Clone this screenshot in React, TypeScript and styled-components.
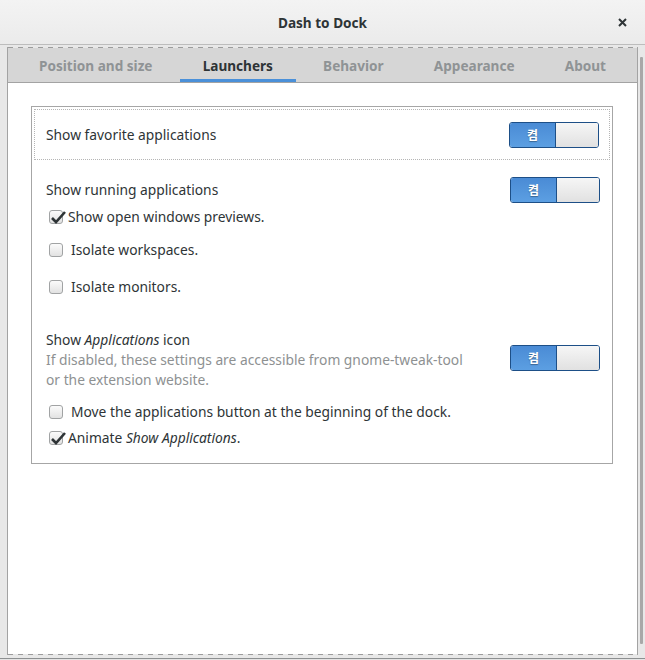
import React from 'react';
import styled, { createGlobalStyle } from 'styled-components';

const GlobalStyle = createGlobalStyle`
  html, body {
    margin: 0;
    padding: 0;
    background: #e4e4e4;
  }
  body {
    font-family: "Noto Sans", "Noto Sans CJK KR", sans-serif;
    font-size: 13.8px;
    color: #2e3436;
  }
`;

const Window = styled.div`
  width: 645px;
  height: 659px;
  box-sizing: border-box;
  display: flex;
  flex-direction: column;
  background: #e8e8e8;
  border-bottom: 1px solid #8d9091;
`;

const TitleBar = styled.div`
  height: 45px;
  flex: none;
  box-sizing: border-box;
  display: grid;
  grid-template-columns: 1fr auto 1fr;
  align-items: center;
  background: linear-gradient(#f3f3f3, #ebebeb);
  border-bottom: 1px solid #bdbdbd;
`;

const Title = styled.div`
  grid-column: 2;
  font-weight: bold;
  font-size: 13.6px;
  color: #2e3436;
`;

const CloseButton = styled.div`
  grid-column: 3;
  justify-self: end;
  margin-right: 17px;
  width: 12px;
  height: 12px;
  display: flex;
  align-items: center;
  justify-content: center;
`;

const Body = styled.div`
  flex: 1;
  display: flex;
  min-height: 0;
`;

const Notebook = styled.div`
  flex: 1;
  margin: 2px 0 3px 7px;
  display: flex;
  flex-direction: column;
  border-left: 1px solid #a3a3a3;
  border-right: 1px solid #a3a3a3;
`;

const DashedEdge = styled.div`
  height: 1px;
  flex: none;
  background: repeating-linear-gradient(to right, #9c9c9c 0 5px, transparent 5px 10px);
`;

const ScrollTrack = styled.div`
  width: 7px;
  flex: none;
  display: flex;
  padding: 12px 0 14px;
  box-sizing: border-box;
`;

const ScrollThumb = styled.div`
  width: 3px;
  margin-left: 2px;
  background: #a8a8a8;
  border-radius: 1px;
`;

const TabStrip = styled.div`
  height: 35px;
  flex: none;
  box-sizing: border-box;
  display: flex;
  justify-content: space-between;
  padding: 0 8px;
  background: #d6d6d6;
  border-bottom: 1px solid #a3a3a3;
`;

const Tab = styled.div<{ $active?: boolean }>`
  padding: 0 23px;
  display: flex;
  align-items: center;
  font-weight: bold;
  font-size: 13.6px;
  color: ${p => (p.$active ? '#2e3436' : '#8f9395')};
  box-shadow: ${p => (p.$active ? 'inset 0 -3px 0 #4a90d9' : 'none')};
`;

const Page = styled.div`
  flex: 1;
  background: #ffffff;
  padding: 23px 24px 0 23px;
`;

const Frame = styled.div`
  border: 1px solid #a6a6a6;
  padding-bottom: 15px;
`;

const FocusRow = styled.div`
  margin: 2px;
  height: 51px;
  box-sizing: border-box;
  border: 1px dotted #b5b5b5;
  display: flex;
  align-items: center;
  justify-content: space-between;
  padding: 0 10px 0 11px;
`;

const Section = styled.div<{ $top: number }>`
  padding: ${p => p.$top}px 12px 0 14px;
`;

const HeaderRow = styled.div`
  display: flex;
  align-items: center;
  justify-content: space-between;
  min-height: 26px;
`;

const Label = styled.div`
  line-height: 20px;
`;

const Hint = styled.div`
  line-height: 20px;
  color: #8e9192;
`;

const CheckRow = styled.div<{ $top: number; $checked?: boolean }>`
  margin-top: ${p => p.$top}px;
  height: 20px;
  display: flex;
  align-items: center;
  gap: ${p => (p.$checked ? 5 : 8)}px;
  padding-left: 3px;
  line-height: 20px;
`;

const Box = styled.span`
  position: relative;
  width: 14px;
  height: 14px;
  flex: none;
  box-sizing: border-box;
  border: 1px solid #a1a3a4;
  border-radius: 3px;
  background: linear-gradient(#fbfbfb, #e2e2e2);
`;

const CheckMark = styled.svg`
  position: absolute;
  left: 0;
  top: -2px;
  overflow: visible;
`;

const Switch = styled.div<{ $lift?: number }>`
  width: 90px;
  height: 26px;
  flex: none;
  box-sizing: border-box;
  display: flex;
  border: 1px solid #1d4f87;
  border-radius: 3px;
  overflow: hidden;
  margin-bottom: ${p => (p.$lift ?? 0) * 2}px;
`;

const SwitchOn = styled.div`
  width: 45px;
  display: flex;
  align-items: center;
  justify-content: center;
  background: linear-gradient(#4a8bd5, #5c9fe2);
  color: #ffffff;
  font-weight: bold;
  font-size: 12px;
  text-shadow: 0 1px 1px rgba(0, 0, 0, 0.35);
`;

const SwitchKnob = styled.div`
  flex: 1;
  border-left: 1px solid #1d4f87;
  background: linear-gradient(#f6f6f6, #e1e1e1);
`;

const Toggle = ({ lift }: { lift?: number }) => (
  <Switch $lift={lift}>
    <SwitchOn>켬</SwitchOn>
    <SwitchKnob />
  </Switch>
);

const Check = ({ checked, top, children }: { checked?: boolean; top: number; children: React.ReactNode }) => (
  <CheckRow $top={top} $checked={checked}>
    <Box>
      {checked && (
        <CheckMark width="16" height="16" viewBox="0 0 16 16">
          <polyline points="2,9 6,13 15,3" fill="none" stroke="#2e3436" strokeWidth="2.6" />
        </CheckMark>
      )}
    </Box>
    <span>{children}</span>
  </CheckRow>
);

const tabs = ['Position and size', 'Launchers', 'Behavior', 'Appearance', 'About'];

export default function App() {
  return (
    <>
      <GlobalStyle />
      <Window>
        <TitleBar>
          <Title>Dash to Dock</Title>
          <CloseButton>
            <svg width="9" height="9" viewBox="0 0 9 9">
              <path d="M1 1 L8 8 M8 1 L1 8" stroke="#2e3436" strokeWidth="2" />
            </svg>
          </CloseButton>
        </TitleBar>
        <Body>
          <Notebook>
            <DashedEdge />
            <TabStrip>
              {tabs.map(t => (
                <Tab key={t} $active={t === 'Launchers'}>
                  {t}
                </Tab>
              ))}
            </TabStrip>
            <Page>
              <Frame>
                <FocusRow>
                  <Label>Show favorite applications</Label>
                  <Toggle />
                </FocusRow>

                <Section $top={15}>
                  <HeaderRow>
                    <Label>Show running applications</Label>
                    <Toggle />
                  </HeaderRow>
                  <Check checked top={4}>Show open windows previews.</Check>
                  <Check top={13}>Isolate workspaces.</Check>
                  <Check top={17}>Isolate monitors.</Check>
                </Section>

                <Section $top={33}>
                  <HeaderRow>
                    <div>
                      <Label>
                        Show <i>Applications</i> icon
                      </Label>
                      <Hint>
                        If disabled, these settings are accessible from gnome-tweak-tool
                        <br />
                        or the extension website.
                      </Hint>
                    </div>
                    <Toggle lift={2} />
                  </HeaderRow>
                  <Check top={12}>Move the applications button at the beginning of the dock.</Check>
                  <Check checked top={6}>
                    Animate <i>Show Applications</i>.
                  </Check>
                </Section>
              </Frame>
            </Page>
            <DashedEdge />
          </Notebook>
          <ScrollTrack>
            <ScrollThumb />
          </ScrollTrack>
        </Body>
      </Window>
    </>
  );
}
